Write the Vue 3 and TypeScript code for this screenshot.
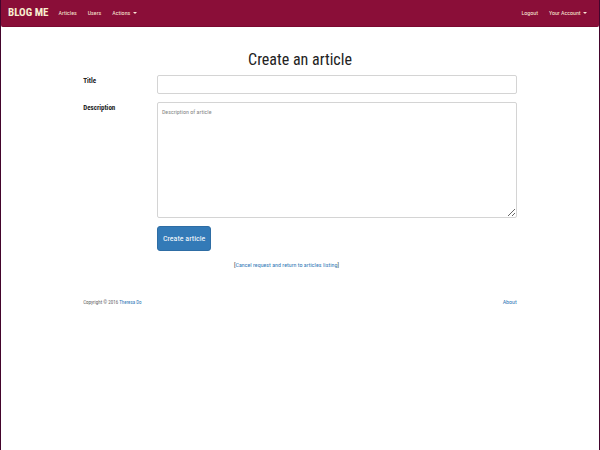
<script setup lang="ts">
import { ref } from 'vue'

const title = ref('')
const description = ref('')
</script>

<template>
  <div class="page">
    <header class="navbar">
      <a class="brand" href="#">BLOG ME</a>
      <nav class="links">
        <a href="#">Articles</a>
        <a href="#">Users</a>
        <a href="#">Actions <span class="caret"></span></a>
      </nav>
      <nav class="links account">
        <a href="#">Logout</a>
        <a href="#">Your Account <span class="caret"></span></a>
      </nav>
    </header>

    <main class="container">
      <h1>Create an article</h1>
      <form @submit.prevent>
        <div class="row">
          <label for="title">Title</label>
          <input id="title" v-model="title" type="text" />
        </div>
        <div class="row">
          <label for="description">Description</label>
          <textarea id="description" v-model="description" placeholder="Description of article"></textarea>
        </div>
        <div class="row">
          <button type="submit">Create article</button>
        </div>
      </form>
      <p class="cancel">[<a href="#">Cancel request and return to articles listing</a>]</p>
      <footer>
        <small>Copyright © 2016 <a href="#">Theresa Do</a></small>
        <a href="#">About</a>
      </footer>
    </main>
  </div>
</template>

<style>
body {
  background: #fff;
}
</style>

<style scoped>
* {
  box-sizing: border-box;
}

.page {
  min-height: 100vh;
  border: solid #43042c;
  border-width: 0 1px;
  background: #fff;
  color: #333;
  font: 6px/10px "Roboto Condensed", "Liberation Sans", sans-serif;
}

a {
  color: #337ab7;
  text-decoration: none;
}

.navbar {
  display: flex;
  align-items: center;
  height: 27px;
  padding: 0 12px 0 7px;
  border-bottom: 1px solid #7b0931;
  border-radius: 0 0 2px 2px;
  background: #8a0e38;
}

.navbar a {
  color: #f8e6d4;
}

.navbar .brand {
  margin-right: 10px;
  color: #f8efd0;
  font-size: 11px;
  font-weight: bold;
}

.links {
  display: flex;
  gap: 11px;
}

.account {
  margin-left: auto;
}

.caret {
  display: inline-block;
  margin-left: 1px;
  border: solid transparent;
  border-width: 2px 2px 0;
  border-top-color: currentColor;
  vertical-align: middle;
}

.container {
  width: 72.5%;
  margin: 0 auto;
  padding-top: 22px;
}

h1 {
  margin: 0 0 4px;
  color: #222;
  font-size: 16px;
  font-weight: normal;
  line-height: 22px;
  text-align: center;
}

form {
  display: grid;
  gap: 8px;
}

.row {
  display: grid;
  grid-template-columns: 17% 1fr;
  align-items: start;
}

label {
  padding-top: 1px;
  color: #222;
  font-size: 7px;
  font-weight: bold;
}

input,
textarea {
  display: block;
  width: 100%;
  padding: 4px;
  border: 1px solid #d4d4d4;
  border-radius: 2px;
  background: #fff;
  color: #555;
  font: inherit;
}

input {
  height: 19px;
}

textarea {
  height: 116px;
  resize: vertical;
}

textarea::placeholder {
  color: #888;
}

button {
  grid-column: 2;
  justify-self: start;
  height: 25px;
  padding: 0 5px;
  border: 1px solid #2e6da4;
  border-radius: 3px;
  background: #337ab7;
  color: #fff;
  font: inherit;
  font-size: 8px;
}

.cancel {
  margin: 9px 0 27px;
  padding-right: 27px;
  text-align: center;
}

footer {
  display: flex;
  justify-content: space-between;
  color: #666;
}

footer small {
  font-size: 5px;
}
</style>
